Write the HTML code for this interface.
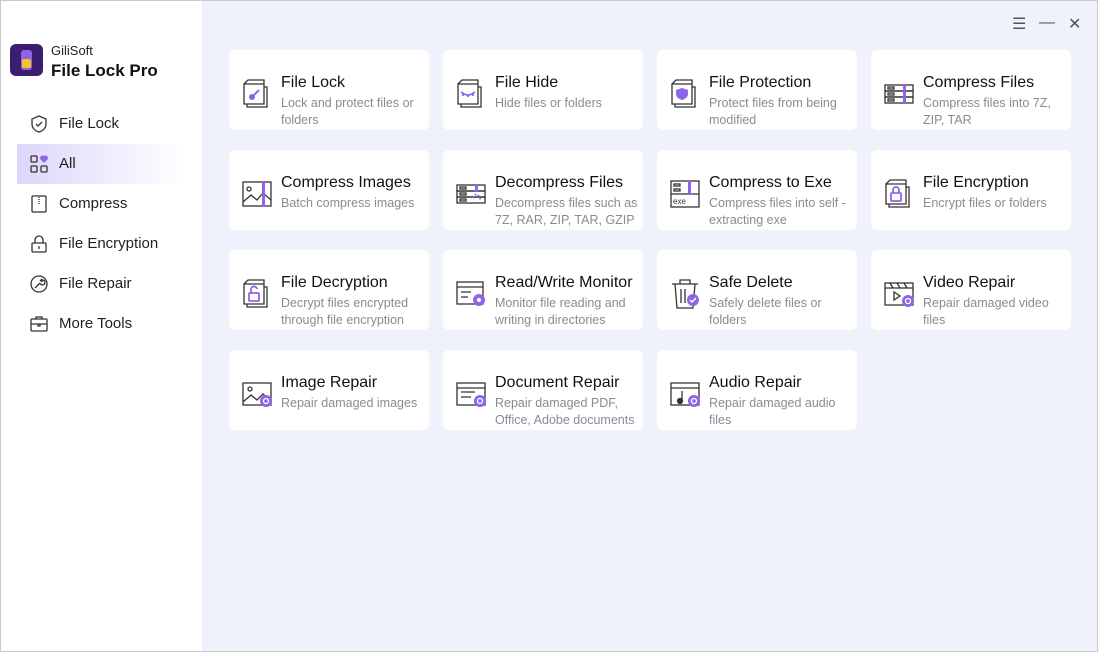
<!DOCTYPE html>
<html><head><meta charset="utf-8"><style>
*{margin:0;padding:0;box-sizing:border-box}
body{width:1098px;height:652px;overflow:hidden;font-family:"Liberation Sans","Noto Sans CJK SC",sans-serif;background:#eff2fb;position:relative}
.win{position:absolute;inset:0;border:1px solid #c8c8cc;z-index:5;pointer-events:none}
.side{position:absolute;left:1px;top:1px;width:201px;height:650px;background:#fff}
.logo{position:absolute;left:9px;top:43px;width:33px;height:32px;border-radius:6px;background:#3b1f6e}
.logo i{position:absolute;left:11px;top:6px;width:11px;height:20px;border-radius:3px;background:#8f64e6}
.logo b{position:absolute;left:12px;top:15px;width:9px;height:9px;border-radius:2px;background:#f2c230}
.brand1{position:absolute;left:50px;top:42px;font-size:13px;color:#222}
.brand2{position:absolute;left:50px;top:60px;font-size:17px;font-weight:bold;color:#111}
.nav{position:absolute;left:16px;width:170px;height:40px;font-size:15px;color:#222;line-height:40px;padding-left:42px}
.nav.act{background:linear-gradient(90deg,#ddd6fa,#fff)}
.nav svg{position:absolute;left:13px;top:11px}
.card{position:absolute;width:200px;height:80px;background:#fff;border-radius:6px}
.card svg{position:absolute;left:11px;top:27px}
.card h3{position:absolute;left:52px;top:24px;font-size:16px;font-weight:normal;color:#111;white-space:nowrap}
.card p{position:absolute;left:52px;top:45px;width:150px;font-size:12.5px;line-height:17px;color:#8a8a96}
.ctl{position:absolute;top:14px;font-size:16px;color:#555}
</style></head><body>
<div class="win"></div>
<div class="side">
<div class="logo"><i></i><b></b></div>
<div class="brand1">GiliSoft</div>
<div class="brand2">File Lock Pro</div>
<div class="nav" style="top:103px"><svg width="18" height="18" viewBox="0 0 18 18" fill="none" stroke="#333" stroke-width="1.3"><path d="M9 1l7 3v5c0 4-3 7-7 8-4-1-7-4-7-8V4z"/><path d="M6 9l2 2 4-4"/></svg>File Lock</div>
<div class="nav act" style="top:143px"><svg width="18" height="18" viewBox="0 0 18 18" fill="none" stroke="#333" stroke-width="1.3"><rect x="1" y="1" width="6" height="6" rx="1"/><rect x="1" y="11" width="6" height="6" rx="1"/><rect x="11" y="11" width="6" height="6" rx="1"/><path d="M14 7l-3-3a1.8 1.8 0 013-2 1.8 1.8 0 013 2z" fill="#8f64e6" stroke="#8f64e6"/></svg>All</div>
<div class="nav" style="top:183px"><svg width="18" height="18" viewBox="0 0 18 18" fill="none" stroke="#333" stroke-width="1.3"><rect x="2" y="1" width="14" height="16" rx="1"/><path d="M9 2v8" stroke-dasharray="1 1"/></svg>Compress</div>
<div class="nav" style="top:223px"><svg width="18" height="18" viewBox="0 0 18 18" fill="none" stroke="#333" stroke-width="1.3"><rect x="2" y="8" width="14" height="9" rx="1"/><path d="M5 8V5a4 4 0 018 0v3M9 11v3"/></svg>File Encryption</div>
<div class="nav" style="top:263px"><svg width="18" height="18" viewBox="0 0 18 18" fill="none" stroke="#333" stroke-width="1.3"><circle cx="9" cy="9" r="8"/><path d="M5 13l5-5M10 8a2.5 2.5 0 103-3l-1.5 1.5-1-1L12 4"/></svg>File Repair</div>
<div class="nav" style="top:303px"><svg width="18" height="18" viewBox="0 0 18 18" fill="none" stroke="#333" stroke-width="1.3"><rect x="1" y="4" width="16" height="12" rx="1"/><path d="M6 4V2h6v2M1 9h16M8 9v2h2V9"/></svg>More Tools</div>
</div>
<div class="ctl" style="left:1012px">☰</div>
<div class="ctl" style="left:1039px;top:14px">—</div>
<div class="ctl" style="left:1068px">✕</div>

<div class="card" style="left:229px;top:50px"><svg width="34" height="34" viewBox="0 0 34 34" fill="none" stroke="#333" stroke-width="1.3"><path d="M4 7h20v20H4zM24 10h3v20H7v-3M4 7l4-4h16v4"/><circle cx="12" cy="20" r="3" fill="#8f64e6" stroke="none"/><path d="M13 19l6-6" stroke="#8f64e6" stroke-width="2"/></svg><h3>File Lock</h3><p>Lock and protect files or folders</p></div>
<div class="card" style="left:443px;top:50px"><svg width="34" height="34" viewBox="0 0 34 34" fill="none" stroke="#333" stroke-width="1.3"><path d="M4 7h20v20H4zM24 10h3v20H7v-3M4 7l4-4h16v4"/><path d="M7 15q7 6 14 0M9 17v2M14 18v2M19 17v2" stroke="#8f64e6" stroke-width="1.8"/></svg><h3>File Hide</h3><p>Hide files or folders</p></div>
<div class="card" style="left:657px;top:50px"><svg width="34" height="34" viewBox="0 0 34 34" fill="none" stroke="#333" stroke-width="1.3"><path d="M4 7h20v20H4zM24 10h3v20H7v-3M4 7l4-4h16v4"/><path d="M14 11l6 2v4c0 3-3 5-6 6-3-1-6-3-6-6v-4z" fill="#8f64e6" stroke="none"/></svg><h3>File Protection</h3><p>Protect files from being modified</p></div>
<div class="card" style="left:871px;top:50px"><svg width="34" height="34" viewBox="0 0 34 34" fill="none" stroke="#333" stroke-width="1.3"><rect x="3" y="8" width="28" height="6"/><rect x="3" y="14" width="28" height="6"/><rect x="3" y="20" width="28" height="6"/><rect x="6" y="10" width="6" height="2"/><rect x="6" y="16" width="6" height="2"/><rect x="6" y="22" width="6" height="2"/><rect x="21" y="7" width="3" height="20" fill="#8f64e6" stroke="none"/></svg><h3>Compress Files</h3><p>Compress files into 7Z, ZIP, TAR</p></div>

<div class="card" style="left:229px;top:150px"><svg width="34" height="34" viewBox="0 0 34 34" fill="none" stroke="#333" stroke-width="1.3"><rect x="3" y="5" width="28" height="24"/><circle cx="9" cy="12" r="2"/><path d="M3 25l8-7 6 5 6-7 8 7"/><rect x="22" y="4" width="3" height="26" fill="#8f64e6" stroke="none"/></svg><h3>Compress Images</h3><p>Batch compress images</p></div>
<div class="card" style="left:443px;top:150px"><svg width="34" height="34" viewBox="0 0 34 34" fill="none" stroke="#333" stroke-width="1.3"><rect x="3" y="8" width="28" height="6"/><rect x="3" y="14" width="28" height="6"/><rect x="3" y="20" width="28" height="6"/><rect x="6" y="10" width="6" height="2"/><rect x="6" y="16" width="6" height="2"/><rect x="6" y="22" width="6" height="2"/><rect x="21" y="7" width="3" height="8" fill="#8f64e6" stroke="none"/><path d="M22 17l-4 6M24 18l3 5" stroke="#8f64e6" stroke-width="2" stroke-dasharray="1.5 2"/></svg><h3>Decompress Files</h3><p>Decompress files such as 7Z, RAR, ZIP, TAR, GZIP</p></div>
<div class="card" style="left:657px;top:150px"><svg width="34" height="34" viewBox="0 0 34 34" fill="none" stroke="#333" stroke-width="1.3"><rect x="3" y="4" width="28" height="26"/><rect x="6" y="7" width="6" height="2"/><rect x="6" y="12" width="6" height="2"/><path d="M3 17h28"/><text x="5" y="27" font-size="8" fill="#333" stroke="none" font-family="Liberation Sans">exe</text><rect x="20" y="4" width="3" height="13" fill="#8f64e6" stroke="none"/></svg><h3>Compress to Exe</h3><p>Compress files into self - extracting exe</p></div>
<div class="card" style="left:871px;top:150px"><svg width="34" height="34" viewBox="0 0 34 34" fill="none" stroke="#333" stroke-width="1.3"><path d="M4 7h20v20H4zM24 10h3v20H7v-3M4 7l4-4h16v4"/><rect x="9" y="16" width="10" height="8" rx="1" stroke="#8f64e6" stroke-width="1.8"/><path d="M11 16v-3a3 3 0 016 0v3" stroke="#8f64e6" stroke-width="1.8"/></svg><h3>File Encryption</h3><p>Encrypt files or folders</p></div>

<div class="card" style="left:229px;top:250px"><svg width="34" height="34" viewBox="0 0 34 34" fill="none" stroke="#333" stroke-width="1.3"><path d="M4 7h20v20H4zM24 10h3v20H7v-3M4 7l4-4h16v4"/><rect x="9" y="16" width="10" height="8" rx="1" stroke="#8f64e6" stroke-width="1.8"/><path d="M11 16v-3a3 3 0 016-1" stroke="#8f64e6" stroke-width="1.8"/></svg><h3>File Decryption</h3><p>Decrypt files encrypted through file encryption</p></div>
<div class="card" style="left:443px;top:250px"><svg width="34" height="34" viewBox="0 0 34 34" fill="none" stroke="#333" stroke-width="1.3"><rect x="3" y="5" width="26" height="22"/><path d="M3 10h26M7 15h10M7 20h7"/><circle cx="25" cy="23" r="6" fill="#8f64e6" stroke="none"/><circle cx="25" cy="23" r="2" fill="#fff" stroke="none"/></svg><h3>Read/Write Monitor</h3><p>Monitor file reading and writing in directories</p></div>
<div class="card" style="left:657px;top:250px"><svg width="34" height="34" viewBox="0 0 34 34" fill="none" stroke="#333" stroke-width="1.3"><path d="M4 7h26M12 7V3h10v4M7 7l2 24h16l2-24M13 12v14M17 12v14"/><circle cx="25" cy="23" r="6" fill="#8f64e6" stroke="none"/><path d="M22 23l2 2 4-4" stroke="#fff" stroke-width="1.5"/></svg><h3>Safe Delete</h3><p>Safely delete files or folders</p></div>
<div class="card" style="left:871px;top:250px"><svg width="34" height="34" viewBox="0 0 34 34" fill="none" stroke="#333" stroke-width="1.3"><rect x="3" y="6" width="28" height="22"/><path d="M3 11h28M8 6l3 5M15 6l3 5M22 6l3 5M12 15v8l6-4z"/><circle cx="26" cy="24" r="6" fill="#8f64e6" stroke="none"/><circle cx="26" cy="24" r="2.5" stroke="#fff"/></svg><h3>Video Repair</h3><p>Repair damaged video files</p></div>

<div class="card" style="left:229px;top:350px"><svg width="34" height="34" viewBox="0 0 34 34" fill="none" stroke="#333" stroke-width="1.3"><rect x="3" y="6" width="28" height="22"/><circle cx="10" cy="12" r="2"/><path d="M3 25l8-7 6 5 6-6 8 7"/><circle cx="26" cy="24" r="6" fill="#8f64e6" stroke="none"/><circle cx="26" cy="24" r="2.5" stroke="#fff"/></svg><h3>Image Repair</h3><p>Repair damaged images</p></div>
<div class="card" style="left:443px;top:350px"><svg width="34" height="34" viewBox="0 0 34 34" fill="none" stroke="#333" stroke-width="1.3"><rect x="3" y="6" width="28" height="22"/><path d="M3 11h28M7 15h14M7 20h10"/><circle cx="26" cy="24" r="6" fill="#8f64e6" stroke="none"/><circle cx="26" cy="24" r="2.5" stroke="#fff"/></svg><h3>Document Repair</h3><p>Repair damaged PDF, Office, Adobe documents</p></div>
<div class="card" style="left:657px;top:350px"><svg width="34" height="34" viewBox="0 0 34 34" fill="none" stroke="#333" stroke-width="1.3"><rect x="3" y="6" width="28" height="22"/><path d="M3 11h28M14 14v10"/><circle cx="12" cy="24" r="2.5" fill="#333"/><circle cx="26" cy="24" r="6" fill="#8f64e6" stroke="none"/><circle cx="26" cy="24" r="2.5" stroke="#fff"/></svg><h3>Audio Repair</h3><p>Repair damaged audio files</p></div>
</body></html>
